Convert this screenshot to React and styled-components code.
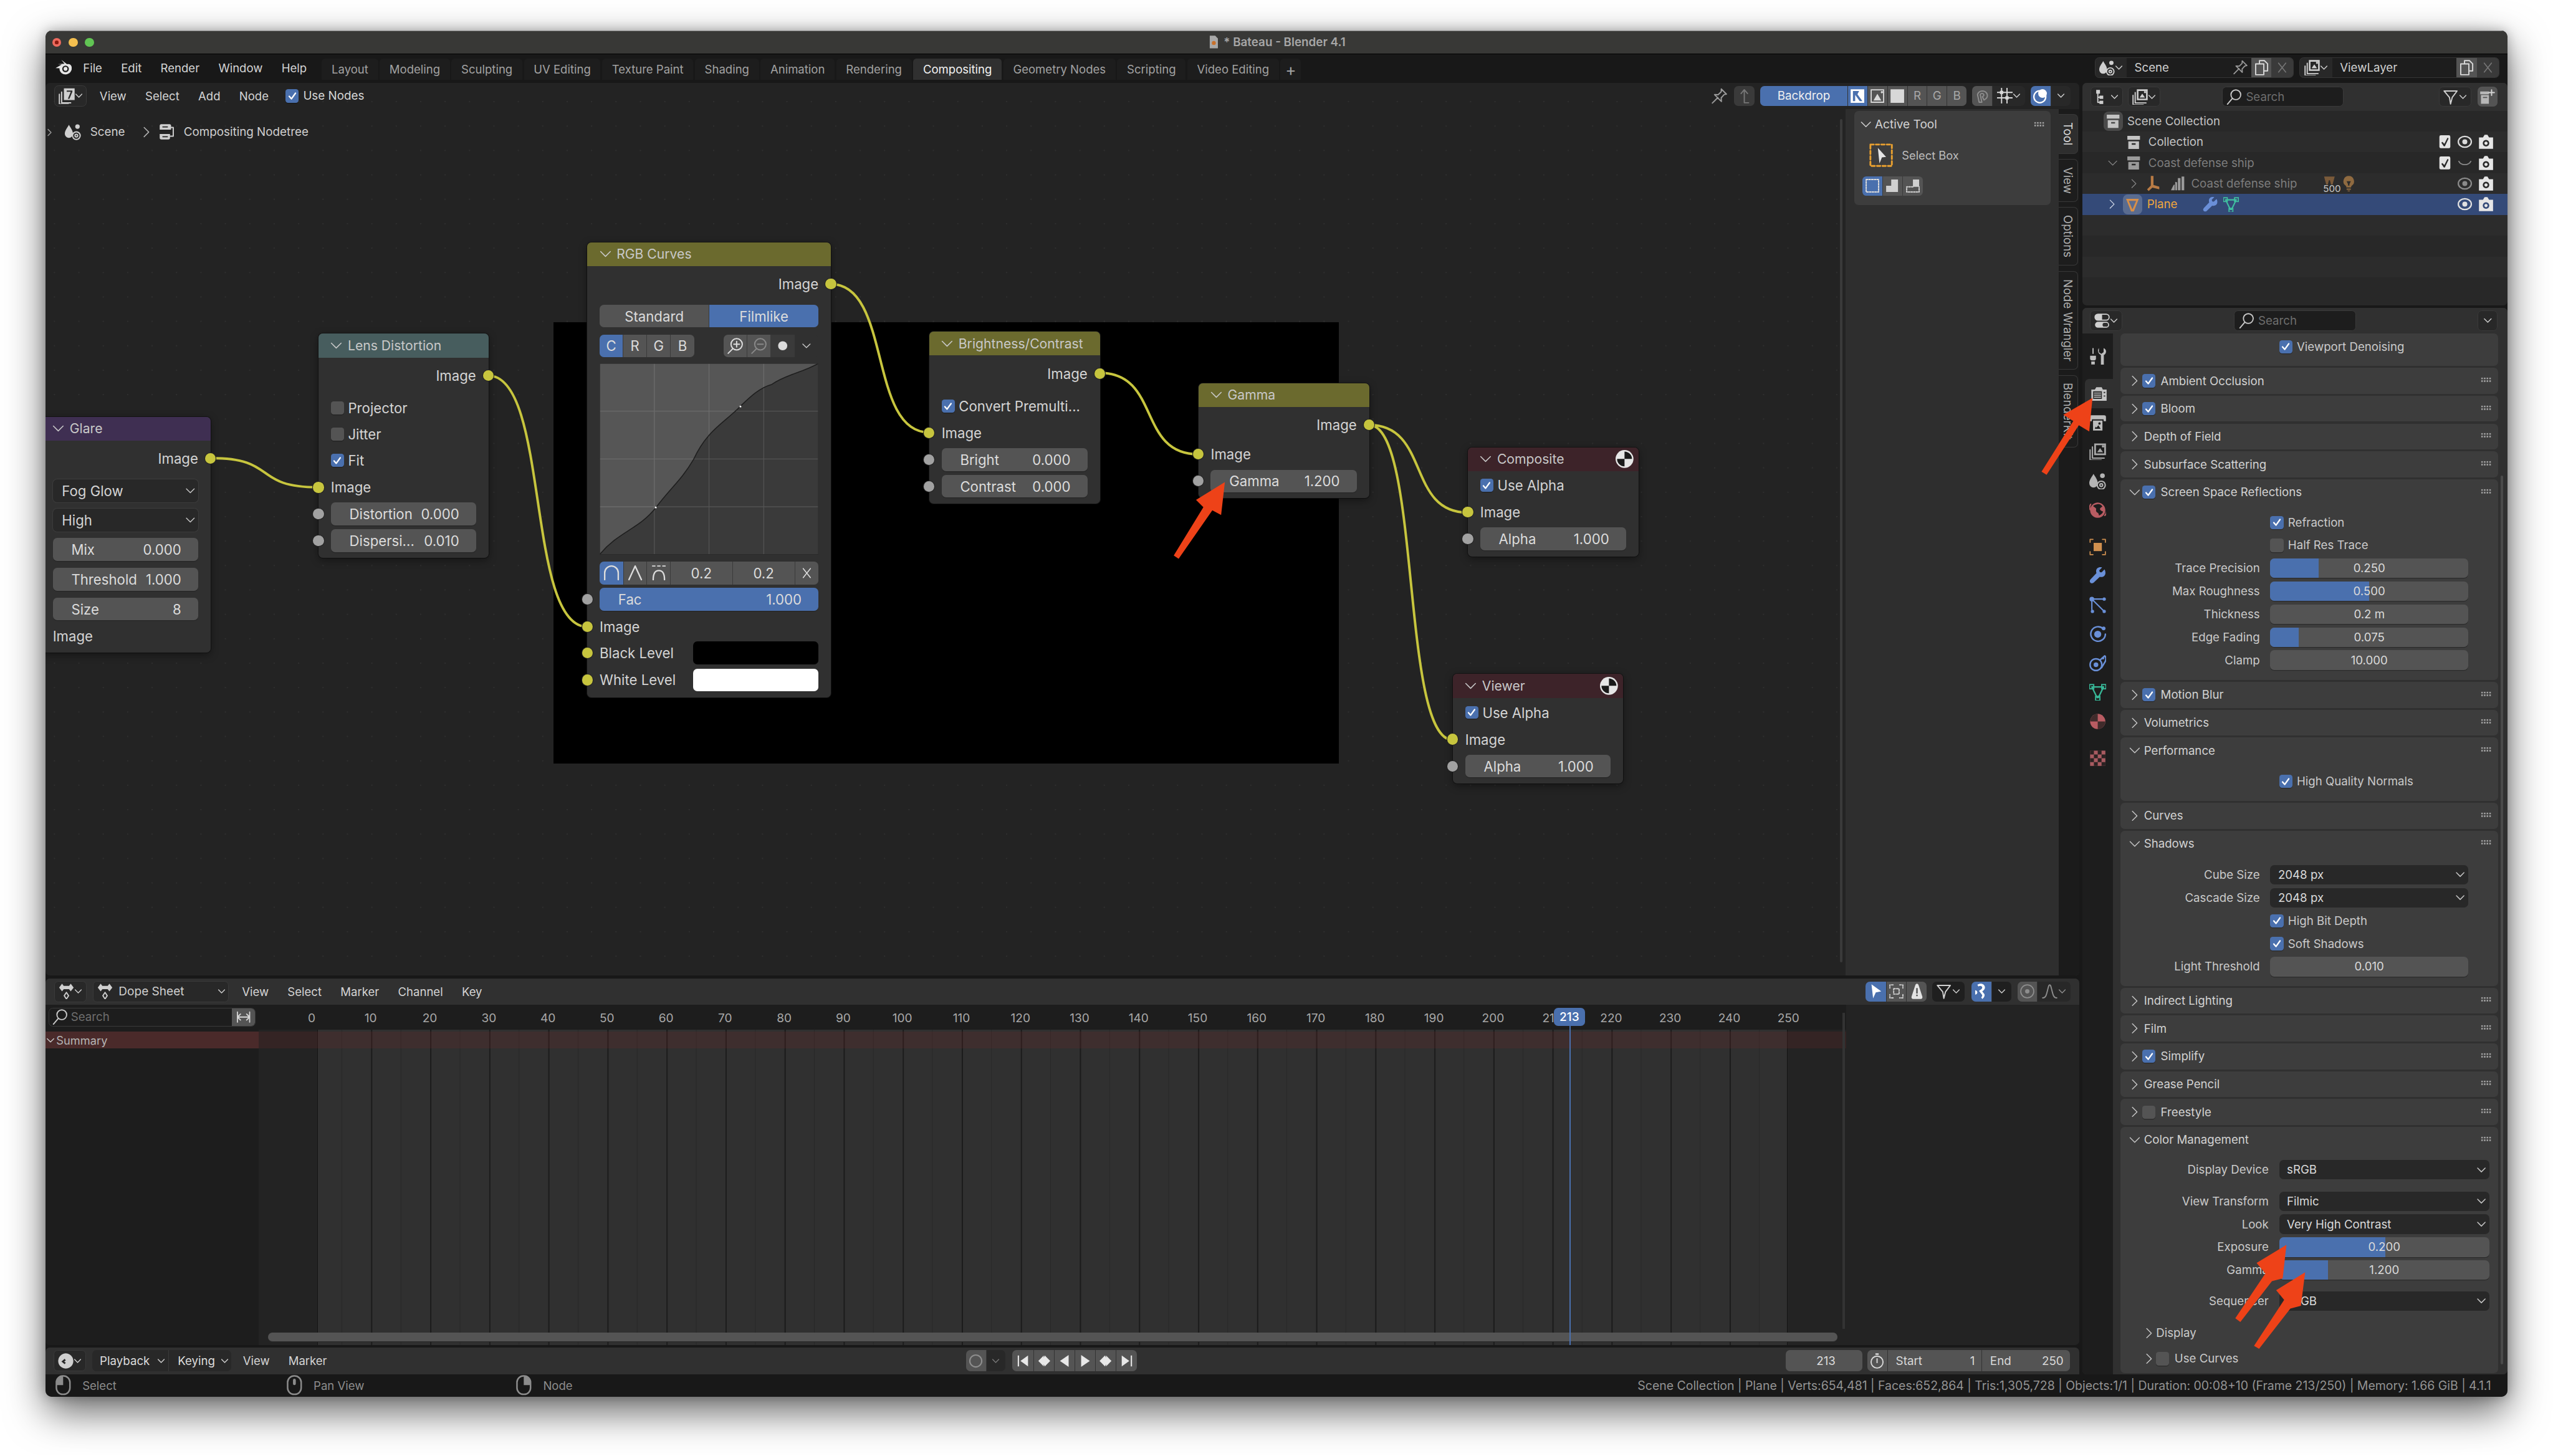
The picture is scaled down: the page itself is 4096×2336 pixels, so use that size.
import styled, { createGlobalStyle } from 'styled-components'

// all sizes below are in the 1568 wide space of the reference, Page scales them up
const GlobalStyle = createGlobalStyle`
  html, body { margin: 0; padding: 0; background: #fff; overflow: hidden; }
  * { box-sizing: border-box; }
`

const Page = styled.div`
  zoom: 2.6122;
  position: relative;
  width: 1568px;
  height: 894px;
  padding: 18.8px 28px 0;
  font-family: Inter, "Noto Sans", "Liberation Sans", sans-serif;
  font-size: 7.15px;
  color: #d6d6d6;
`

const Win = styled.div`
  width: 1512px;
  height: 839px;
  display: flex;
  flex-direction: column;
  background: #181818;
  border-radius: 4px;
  overflow: hidden;
  box-shadow: 0 9px 24px rgba(0, 0, 0, 0.6), 0 0 7px rgba(0, 0, 0, 0.25);
`

const TitleBar = styled.div`
  height: 14.4px;
  flex: none;
  display: flex;
  align-items: center;
  justify-content: center;
  gap: 2px;
  position: relative;
  background: #383836;
  border-top: 0.6px solid #8a8a8a;
  border-bottom: 0.5px solid #000;
  font-weight: 600;
  font-size: 7.2px;
  color: #a6a6a6;
`

const Lights = styled.div`
  position: absolute;
  left: 4px;
  top: 4px;
  display: flex;
  gap: 4.4px;
`

const Light = styled.div`
  width: 5.7px;
  height: 5.7px;
  border-radius: 50%;
  background: ${p => p.$c};
  display: flex;
  align-items: center;
  justify-content: center;
  &::after {
    content: '';
    width: 2px;
    height: 2px;
    border-radius: 50%;
    background: ${p => p.$dot || 'transparent'};
  }
`

const TopBar = styled.div`
  height: 17.7px;
  flex: none;
  display: flex;
  align-items: flex-start;
  background: #181818;
`

const MenuSection = styled.div`
  width: 169.7px;
  height: 100%;
  display: flex;
  align-items: center;
  padding: 0 0 1px 6px;
  gap: 7px;
`

const MenuRow = styled.div`
  display: flex;
  align-items: center;
  gap: ${p => p.$gap || 11.6}px;
  margin-left: ${p => p.$ml || 0}px;
  color: ${p => p.$c || '#d4d4d4'};
  font-size: 7.1px;
  white-space: nowrap;
`

const Tabs = styled.div`
  display: flex;
  gap: 1px;
  height: 13.2px;
  margin-top: 2.8px;
`

const Tab = styled.div`
  display: flex;
  align-items: center;
  padding: 0 ${p => p.$pad || 6}px;
  border-radius: 2px 2px 0 0;
  background: ${p => (p.$on ? '#303030' : '#1d1d1d')};
  color: ${p => (p.$on ? '#f2f2f2' : '#a2a2a2')};
  font-size: ${p => p.$fs || 7.1}px;
  white-space: nowrap;
`

const SceneBoxes = styled.div`
  margin-left: auto;
  margin-right: 5px;
  margin-top: 2px;
  display: flex;
  gap: 3.6px;
`

const SelectorBox = styled.div`
  width: ${p => p.$w}px;
  height: 12.5px;
  display: flex;
  align-items: stretch;
  border-radius: 2.6px;
  overflow: hidden;
  background: #282828;
  border: 0.5px solid #353535;
`

const SelectorIcon = styled.div`
  width: ${p => p.$w}px;
  display: flex;
  align-items: center;
  justify-content: center;
  color: #d0d0d0;
`

const SelectorField = styled.div`
  flex: 1;
  display: flex;
  align-items: center;
  justify-content: space-between;
  padding: 0 2px 0 4.8px;
  background: #1d1d1d;
  color: #d0d0d0;
  font-size: 7.15px;
`

const SmallBtn = styled.div`
  width: ${p => p.$w || 12.5}px;
  height: ${p => (p.$h ? `${p.$h}px` : 'auto')};
  margin-left: ${p => p.$ml || 0}px;
  border-radius: ${p => p.$r || 0}px;
  flex: none;
  display: flex;
  align-items: center;
  justify-content: center;
  background: ${p => p.$bg || '#545454'};
  color: ${p => p.$c || '#d8d8d8'};
`

const Main = styled.div`
  flex: 1;
  min-height: 0;
  display: flex;
  gap: 2px;
`

const LeftCol = styled.div`
  width: 1249px;
  display: flex;
  flex-direction: column;
`

const NodeEditor = styled.div`
  height: 548.3px;
  flex: none;
  display: flex;
  flex-direction: column;
  border-radius: 2.6px;
  overflow: hidden;
  background-color: #232323;
  background-image: radial-gradient(circle at center, #2f2f2f 0.4px, transparent 0.55px);
  background-size: 15px 15px;
  background-position: -2px 4px;
`

const EditorHeader = styled.div`
  height: 16.1px;
  flex: none;
  display: flex;
  align-items: center;
  padding: 0 5.4px;
  background: ${p => p.$bg || 'transparent'};
`

const ModeBtn = styled.div`
  width: ${p => p.$w || 20}px;
  height: ${p => p.$h || 12.8}px;
  margin-left: ${p => p.$ml || 0}px;
  flex: none;
  display: flex;
  align-items: center;
  justify-content: ${p => (p.$between ? 'flex-start' : 'center')};
  padding: ${p => (p.$between ? '0 1.6px 0 2.6px' : '0')};
  background: #282828;
  border-radius: 2.6px;
  border: 0.5px solid #3a3a3a;
  color: #cfcfcf;
  font-size: 7.3px;
`

const ModeText = styled.span`
  margin: 0 auto 0 3.4px;
`

const CheckBox = styled.div`
  width: ${p => p.$s || 8.1}px;
  height: ${p => p.$s || 8.1}px;
  flex: none;
  border-radius: 1.6px;
  display: flex;
  align-items: center;
  justify-content: center;
  background: ${p => (p.$on ? '#4a70ae' : '#545454')};
  box-shadow: 0 0.5px 0 rgba(0, 0, 0, 0.3);
`

const CheckLabel = styled.div`
  display: flex;
  align-items: center;
  gap: ${p => p.$gap || 2.8}px;
  margin-left: ${p => p.$ml || 0}px;
  font-size: ${p => (p.$fs ? `${p.$fs}px` : 'inherit')};
  white-space: nowrap;
`

const Group = styled.div`
  display: flex;
  height: ${p => p.$h || 12.4}px;
  margin-left: ${p => (p.$auto ? 'auto' : `${p.$ml || 0}px`)};
  border-radius: 2.6px;
  overflow: hidden;
  flex: none;
`

const GroupBtn = styled.div`
  width: ${p => p.$w || 12.2}px;
  flex: none;
  display: flex;
  align-items: center;
  justify-content: ${p => (p.$spread ? 'space-between' : 'center')};
  padding: ${p => (p.$spread ? '0 4px 0 5px' : '0')};
  background: ${p => p.$bg || '#545454'};
  color: ${p => p.$c || '#d8d8d8'};
  font-size: 7.2px;
  & + & { border-left: 0.4px solid #333; }
`

const Fill = styled.span`
  flex: 1;
`

const Gap = styled.span`
  width: ${p => p.$w}px;
  flex: none;
`

const EditorBody = styled.div`
  flex: 1;
  min-height: 0;
  display: flex;
`

const Canvas = styled.div`
  flex: 1;
  position: relative;
`

const Backdrop = styled.div`
  position: absolute;
  left: ${340 - 28}px;
  top: ${197.8 - 67}px;
  width: 482.4px;
  height: 271.2px;
  background: #000;
`

const Links = styled.svg`
  position: absolute;
  left: 0;
  top: 0;
  width: 1249px;
  height: 533px;
  pointer-events: none;
  z-index: 2;
`

const Crumbs = styled.div`
  position: absolute;
  left: 12px;
  top: 9px;
  display: flex;
  align-items: center;
  color: #cfcfcf;
  font-size: 7.2px;
`

const EdgeArrow = styled.div`
  position: absolute;
  left: 0;
  top: 8.8px;
  width: 4px;
  height: 11px;
  display: flex;
  align-items: center;
  overflow: hidden;
  color: #9a9a9a;
`

const NodeBox = styled.div`
  position: absolute;
  left: ${p => p.$x - 28}px;
  top: ${p => p.$y - 67}px;
  width: ${p => p.$w}px;
  height: ${p => p.$h}px;
  background: #303030;
  border-radius: 2.6px;
  box-shadow: 0 1.5px 5px rgba(0, 0, 0, 0.4), 0 0 0 0.4px #161616;
  font-size: 8.5px;
  color: #d4d4d4;
  display: flex;
  flex-direction: column;
`

const NodeHead = styled.div`
  height: 14.6px;
  flex: none;
  display: flex;
  align-items: center;
  gap: 3px;
  padding: 0 3px 0 7px;
  border-radius: 2.6px 2.6px 0 0;
  background: ${p => p.$c};
  font-size: 8.1px;
  color: #c8c8c8;
  white-space: nowrap;
`

const BallSlot = styled.span`
  margin-left: auto;
  display: flex;
`

const NodeBody = styled.div`
  display: flex;
  flex-direction: column;
  padding: 0 7.6px;
`

const NodeRow = styled.div`
  height: ${p => p.$h || 14}px;
  margin-top: ${p => p.$mt || 0}px;
  flex: none;
  position: relative;
  display: flex;
  align-items: center;
  justify-content: ${p => (p.$right ? 'flex-end' : 'flex-start')};
  white-space: nowrap;
`

const Socket = styled.div`
  position: absolute;
  top: 3.7px;
  ${p => (p.$right ? 'right' : 'left')}: -10.9px;
  width: 6.6px;
  height: 6.6px;
  border-radius: 50%;
  background: ${p => (p.$gray ? '#a1a1a1' : '#c7c53e')};
  box-shadow: 0 0 0 0.4px #222;
  z-index: 3;
`

const NumField = styled.div`
  width: 100%;
  height: 14px;
  display: flex;
  align-items: center;
  justify-content: space-between;
  padding: 0 10.4px 0 11.4px;
  border-radius: 2.6px;
  background: ${p => (p.$on ? '#4a70ae' : '#545454')};
  box-shadow: 0 0.5px 0 #262626;
  color: #dcdcdc;
  white-space: nowrap;
`

const NodeDrop = styled.div`
  width: 100%;
  height: 14px;
  display: flex;
  align-items: center;
  justify-content: space-between;
  padding: 0 1.6px 0 5.6px;
  border-radius: 2.6px;
  background: #282828;
  box-shadow: 0 0 0 0.4px #3c3c3c;
`

const Seg = styled.div`
  display: flex;
  width: ${p => (p.$w ? `${p.$w}px` : '100%')};
  height: 14px;
  margin-left: ${p => p.$ml || 0}px;
  border-radius: 2.6px;
  overflow: hidden;
  flex: none;
`

const SegBtn = styled.div`
  flex: ${p => (p.$w ? `0 0 ${p.$w}px` : '1')};
  display: flex;
  align-items: center;
  justify-content: center;
  background: ${p => (p.$on ? '#4a70ae' : p.$bg || '#545454')};
  color: ${p => p.$c || '#dcdcdc'};
  & + & { border-left: 0.4px solid #3a3a3a; }
`

const Swatch = styled.div`
  width: 76.9px;
  height: 14px;
  margin-left: auto;
  border-radius: 2.6px;
  background: ${p => p.$c};
`

const CurveBox = styled.svg`
  display: block;
  width: 134.4px;
  height: 117.4px;
`

const Sidebar = styled.div`
  width: 143.5px;
  flex: none;
  display: flex;
  background: #2e2e2e;
  position: relative;
`

const SideScroll = styled.div`
  position: absolute;
  left: -3.4px;
  top: 6px;
  bottom: 8px;
  width: 1.4px;
  border-radius: 1px;
  background: #3a3a3a;
`

const SideMain = styled.div`
  flex: 1;
  padding: 1.3px 5px 0 5.5px;
`

const ToolPanel = styled.div`
  height: 57.7px;
  border-radius: 2.6px;
  background: #3d3d3d;
  padding: 3.2px 4px 0 3.5px;
`

const ToolHead = styled.div`
  display: flex;
  align-items: center;
  gap: 1.6px;
  height: 10px;
  font-size: 7.3px;
  color: #d2d2d2;
`

const Grip = styled.div`
  margin-left: auto;
  width: 6.6px;
  height: 3.3px;
  background-image: radial-gradient(circle, #a0a0a0 0.5px, transparent 0.6px);
  background-size: 1.65px 1.65px;
`

const ToolRow = styled.div`
  display: flex;
  align-items: center;
  gap: 5.5px;
  margin-top: 6.5px;
  padding-left: 5.5px;
  font-size: 7px;
  color: #bcbcbc;
`

const ToolModes = styled.div`
  display: flex;
  margin: 5.6px 0 0 1.4px;
  width: 37px;
  height: 12px;
  border-radius: 2.4px;
  overflow: hidden;
`

const SideTabs = styled.div`
  width: 12.4px;
  flex: none;
  display: flex;
  flex-direction: column;
  gap: 3.2px;
  padding-top: 3px;
  background: #1b1b1b;
`

const SideTab = styled.div`
  width: 11.8px;
  height: ${p => p.$h}px;
  display: flex;
  align-items: center;
  justify-content: center;
  writing-mode: vertical-rl;
  font-size: 7.1px;
  border-radius: 0 2.6px 2.6px 0;
  border: 0.4px solid #383838;
  border-left: 0;
  background: ${p => (p.$on ? '#2e2e2e' : '#1d1d1d')};
  color: ${p => (p.$on ? '#dcdcdc' : '#b0b0b0')};
`

const DopeSheet = styled.div`
  margin-top: 1.8px;
  height: 225px;
  flex: none;
  display: flex;
  flex-direction: column;
  background: #232323;
  border-radius: 2.6px;
  overflow: hidden;
`

const DopeBody = styled.div`
  flex: 1;
  min-height: 0;
  display: flex;
`

const DopeMain = styled.div`
  width: 1106px;
  flex: none;
  display: flex;
  flex-direction: column;
  position: relative;
`

const Ruler = styled.div`
  height: 15.2px;
  flex: none;
  display: flex;
  align-items: center;
  position: relative;
  background: #1d1d1d;
  padding-left: 2px;
`

const SearchBox = styled.div`
  height: 11.7px;
  width: ${p => p.$w}px;
  flex: none;
  display: flex;
  align-items: center;
  gap: 2px;
  padding-left: 1.6px;
  border-radius: 2.6px;
  background: #1d1d1d;
  border: 0.5px solid #3a3a3a;
  color: #6e6e6e;
  font-size: 7.15px;
  overflow: hidden;
`

const SearchToggle = styled.div`
  margin-left: auto;
  width: 14px;
  height: 100%;
  background: #545454;
  color: #d6d6d6;
  display: flex;
  align-items: center;
  justify-content: center;
`

const Frame = styled.span`
  position: absolute;
  left: ${p => p.$x}px;
  top: 3.8px;
  transform: translateX(-50%);
  color: #a8a8a8;
  font-size: 7.3px;
`

const FrameTag = styled.div`
  position: absolute;
  left: 926.4px;
  top: 2px;
  width: 19px;
  height: 11px;
  border-radius: 2.6px;
  background: #4a70ae;
  color: #fff;
  font-size: 7.3px;
  font-weight: 500;
  display: flex;
  align-items: center;
  justify-content: center;
  z-index: 2;
`

const DopeRows = styled.div`
  flex: 1;
  min-height: 0;
  display: flex;
`

const Channels = styled.div`
  width: 130.8px;
  flex: none;
  padding-top: 1.2px;
  background: #1d1d1d;
`

const SummaryChannel = styled.div`
  height: 10.6px;
  display: flex;
  align-items: center;
  gap: 0.8px;
  padding-left: 0.4px;
  background: #4a2a2a;
  color: #b4b4b4;
  font-size: 7px;
`

const Tracks = styled.div`
  flex: 1;
  position: relative;
  background: #232323;
`

const FrameRange = styled.div`
  position: absolute;
  left: 36.2px;
  top: 0;
  bottom: 0;
  width: 903px;
  background-color: #303030;
  background-image:
    linear-gradient(90deg, #1c1c1c 0.6px, transparent 0.6px),
    linear-gradient(90deg, #282828 0.5px, transparent 0.5px);
  background-size: 36.28px 100%, 18.14px 100%;
  background-position: -3.6px 0, -3.6px 0;
  border-left: 0.6px solid #141414;
  border-right: 0.6px solid #141414;
`

const SummaryTrack = styled.div`
  position: absolute;
  left: 0;
  right: 0;
  top: 1.2px;
  height: 10.4px;
  background: rgba(122, 42, 42, 0.2);
`

const CurrentLine = styled.div`
  position: absolute;
  left: 936px;
  top: 13px;
  bottom: 0;
  width: 0.8px;
  background: #4a70ae;
`

const HScroll = styled.div`
  position: absolute;
  left: 5.8px;
  right: 5.4px;
  bottom: 2px;
  height: 5.5px;
  border-radius: 2.7px;
  background: #545454;
  box-shadow: 0 0.5px 0 #2a2a2a;
`

const VScroll = styled.div`
  position: absolute;
  right: 0.8px;
  top: 5px;
  bottom: 10px;
  width: 1.4px;
  background: #333;
`

const TimelineBar = styled.div`
  margin-top: 1.6px;
  height: 16.4px;
  flex: none;
  display: flex;
  align-items: center;
  padding: 0 5.6px 0 5px;
  background: #303030;
  border-radius: 2.6px 2.6px 0 0;
`

const TimelineLeft = styled.div`
  width: 560.5px;
  flex: none;
  display: flex;
  align-items: center;
`

const Field = styled.div`
  height: 12.9px;
  flex: none;
  width: ${p => p.$w}px;
  margin-left: ${p => (p.$auto ? 'auto' : `${p.$ml || 0}px`)};
  display: flex;
  align-items: center;
  justify-content: ${p => (p.$center ? 'center' : 'space-between')};
  padding: ${p => p.$pad || '0 1.8px 0 4.5px'};
  background: ${p => p.$bg || '#545454'};
  color: ${p => p.$c || '#dcdcdc'};
  font-size: 7.15px;
  border-radius: ${p => p.$r || '2.6px'};
  & + & { border-left: 0.4px solid #3a3a3a; }
`

const RightCol = styled.div`
  flex: 1;
  min-width: 0;
  display: flex;
  flex-direction: column;
  gap: 1.8px;
`

const Outliner = styled.div`
  height: 136.5px;
  flex: none;
  display: flex;
  flex-direction: column;
  border-radius: 2.6px;
  overflow: hidden;
  background: #282828;
`

const OutlinerHeader = styled.div`
  height: 17.1px;
  flex: none;
  display: flex;
  align-items: center;
  background: #303030;
  padding: 0 5.8px 0 5px;
`

const SmallSearch = styled(SearchBox)`
  height: 12.4px;
  margin-left: ${p => p.$ml}px;
  padding-left: 2.4px;
  gap: 2.4px;
`

const ORow = styled.div`
  height: 12.8px;
  flex: none;
  display: flex;
  align-items: center;
  position: relative;
  padding-left: ${p => p.$in || 0}px;
  background: ${p => (p.$sel ? '#344a78' : p.$alt ? '#2c2c2c' : '#282828')};
  color: ${p => p.$c || '#c4c4c4'};
  font-size: 7.15px;
  white-space: nowrap;
`

const OText = styled.span`
  margin-left: ${p => p.$ml || 3}px;
`

const ORight = styled.div`
  position: absolute;
  right: 8.4px;
  top: 0;
  bottom: 0;
  display: flex;
  align-items: center;
  gap: 3.2px;
`

const IconHalo = styled.div`
  width: 12px;
  height: 12px;
  flex: none;
  display: flex;
  align-items: center;
  justify-content: center;
  border-radius: 3px;
  background: ${p => p.$bg};
`

const BrushWrap = styled.span`
  position: relative;
  display: flex;
`

const BrushCount = styled.span`
  position: absolute;
  left: 1px;
  top: 4px;
  font-size: 5.8px;
  color: #c8c8c8;
`

const Properties = styled.div`
  flex: 1;
  min-height: 0;
  display: flex;
  flex-direction: column;
  border-radius: 2.6px;
  overflow: hidden;
  background: #303030;
  position: relative;
`

const PropsHeader = styled.div`
  height: 15.6px;
  flex: none;
  display: flex;
  align-items: center;
  padding: 0 6px 0 4.7px;
  background: #303030;
`

const PropsBody = styled.div`
  flex: 1;
  min-height: 0;
  display: flex;
`

const PropTabs = styled.div`
  width: 18.6px;
  flex: none;
  display: flex;
  flex-direction: column;
  padding-top: 5.2px;
  background: #1d1d1d;
`

const PropTab = styled.div`
  height: 17.85px;
  margin-top: ${p => p.$mt || 0}px;
  flex: none;
  display: flex;
  align-items: center;
  justify-content: center;
  ${p => p.$on && 'background: #303030; border-radius: 2.6px 0 0 2.6px; margin-left: 1.4px;'}
`

const PanelList = styled.div`
  flex: 1;
  min-width: 0;
  display: flex;
  flex-direction: column;
  gap: 1.2px;
  padding: 0 5.5px 0 4.9px;
  overflow: hidden;
`

const PanelBox = styled.div`
  flex: none;
  background: #3d3d3d;
  border-radius: 2.6px;
  padding-bottom: ${p => p.$pb || 0}px;
  position: relative;
`

const PanelHead = styled.div`
  height: 15.9px;
  display: flex;
  align-items: center;
  padding-left: 5px;
  gap: 0.7px;
  color: #d2d2d2;
  position: relative;
`

const PanelTitle = styled.span`
  margin-left: ${p => (p.$check ? 2.5 : 1)}px;
`

const PanelGrip = styled(Grip)`
  position: absolute;
  right: 4.4px;
  top: 5.6px;
`

const PanelInner = styled.div`
  padding-top: ${p => p.$pt || 4.4}px;
  display: flex;
  flex-direction: column;
  gap: 2.1px;
`

const PropRow = styled.div`
  height: 12px;
  margin-top: ${p => p.$mt || 0}px;
  display: grid;
  grid-template-columns: ${p => p.$label}px ${p => p.$field}px;
  column-gap: 6.4px;
  align-items: center;
  color: #cacaca;
  white-space: nowrap;
`

const PropLabel = styled.div`
  text-align: right;
`

const Slider = styled.div`
  height: 12px;
  position: relative;
  border-radius: 2.6px;
  overflow: hidden;
  background: #545454;
  box-shadow: 0 0.5px 0 #2c2c2c;
  color: #dadada;
  display: flex;
  align-items: center;
  justify-content: center;
`

const SliderFill = styled.div`
  position: absolute;
  left: 0;
  top: 0;
  bottom: 0;
  background: #4a70ae;
`

const SliderText = styled.span`
  position: relative;
`

const PropDrop = styled.div`
  height: 12px;
  display: flex;
  align-items: center;
  justify-content: space-between;
  padding: 0 1.8px 0 4.8px;
  background: #282828;
  border-radius: 2.6px;
  color: #dadada;
`

const SubRow = styled.div`
  height: 12px;
  margin-top: ${p => p.$mt || 0}px;
  display: flex;
  align-items: center;
  gap: ${p => p.$gap || 2.8}px;
  padding-left: ${p => p.$in}px;
  color: #cacaca;
`

const PropScroll = styled.div`
  position: absolute;
  right: 2.6px;
  top: 103px;
  bottom: 6px;
  width: 1.5px;
  border-radius: 1px;
  background: #4a4a4a;
`

const StatusBar = styled.div`
  height: 13.8px;
  flex: none;
  display: flex;
  align-items: center;
  position: relative;
  padding: 0 10px 0 4.5px;
  background: #181818;
  color: #8c8c8c;
  font-size: 7.1px;
  white-space: nowrap;
`

const StatusItem = styled.div`
  width: ${p => p.$w}px;
  flex: none;
  display: flex;
  align-items: center;
  gap: 5.6px;
`

const StatusText = styled.div`
  margin-left: auto;
  font-size: 7.45px;
  color: #939393;
`

const Overlay = styled.svg`
  position: absolute;
  left: 0;
  top: 0;
  width: 1568px;
  height: 894px;
  pointer-events: none;
  z-index: 10;
`

const IconSvg = styled.svg`
  width: ${p => p.$s}px;
  height: ${p => p.$s}px;
  flex: none;
  color: ${p => p.$c || 'inherit'};
  fill: currentColor;
  display: block;
`

const St = props => (
  <g fill="none" stroke="currentColor" strokeWidth="1.1" strokeLinecap="round" strokeLinejoin="round" {...props} />
)

const icons = {
  blender: <><path d="M6 1.3 11 5.2c2.8-.8 4.6 1.6 4.2 4.2-.5 3-3.3 5.2-6.3 4.8-2.8-.4-4.8-2.9-4.5-5.4L.9 8.7 6.3 5.5 2.8 5.2l6-.4z" /><circle cx="9.7" cy="9.3" r="2.9" fill="#181818" /><circle cx="9.7" cy="9.3" r="1.7" /></>,
  compositor: <><St><path d="M3.5 4.5v9.5h8M1.5 6.5v8.8h8" /></St><path fillRule="evenodd" d="M5.5 1.2h9.5v10.3H5.5zM8 3.2v1.1h3.6L9 10.4h1.4l2.6-6.2V3.2z" /></>,
  scene: <><path d="M4.4 2c1.7 3 3.6 5 3.6 8a3.6 3.6 0 0 1-7.2 0c0-3 2-5 3.6-8z" /><circle cx="12" cy="3.6" r="2" /><St><circle cx="11" cy="11.6" r="3.4" /><circle cx="11" cy="11.6" r="1.2" /></St></>,
  nodetree: <><path fillRule="evenodd" d="M3 1h7.5A1.5 1.5 0 0 1 12 2.5V6H1.5V2.5A1.5 1.5 0 0 1 3 1zM4 3v1h5V3z" /><path fillRule="evenodd" d="M1.5 10H11v3.5A1.5 1.5 0 0 1 9.5 15H3a1.5 1.5 0 0 1-1.5-1.5zM4 12v1h5v-1z" /><St><path d="M12 4h2v8h-3" /></St></>,
  pin: <St><path d="M9.6 1.8 14.2 6.4l-2 .4-2.7 3 .2 3.3-6.2-6.2 3.2.1 2.8-2.7zM6.5 9.5l-5 5" /></St>,
  parent: <St><path d="M8 14.5V3M5 6l3-3.5L11 6M8 14.5h4" /></St>,
  backA: <path fillRule="evenodd" d="M2 2h12v12H2zM4 3.5v9h2V7l4 5.5h2.4L8 6.5 9.5 3.5z" />,
  backB: <path fillRule="evenodd" d="M2 2h12v12H2zM3 3v10h10V3zM4.5 12 8 6l3.500 6zM11 4.500a1 1 0 1 1 0 .1z" />,
  backC: <path d="M2 2h12v12H2V2l12 12z" fillRule="evenodd" />,
  magnet: <St><path d="M5 14 3.500 7a4.700 4.700 0 0 1 9 0c.6 2.500-1 4-3 5l-1.500-3c1-.5 1.500-1 1.300-2a1.800 1.800 0 0 0-3.300 0L7.500 14z" /></St>,
  gridsnap: <><St><path d="M5 1v14M10 1v14M1 5h14M1 10h14" /></St><rect x="3.500" y="3.500" width="3" height="3" /><rect x="8.500" y="8.500" width="3" height="3" /></>,
  overlay: <><St strokeWidth="1.3"><circle cx="7.5" cy="9" r="5.5" /></St><circle cx="10" cy="6" r="4" /></>,
  filter: <St><path d="M1.5 2.5h12L9 8.5l-1.5 6-1-6z" /></St>,
  tree: <><rect x="2" y="1.5" width="3.5" height="3.5" /><rect x="5" y="6.8" width="3.5" height="3" /><rect x="5" y="11.5" width="3.5" height="3" /><St><path d="M3.5 5v8H5M3.500 8.300H5" /></St></>,
  layers: <><St><path d="M3.5 4v9.500h10M1.500 6.500v8.800H11" /></St><path fillRule="evenodd" d="M5 1h10v10H5zM6.500 2.500v7h7v-7zM7.500 8.500 10 5l2.500 3.500zM11.500 3.500a1 1 0 1 1 0 .1z" /></>,
  search: <St><circle cx="9.5" cy="6" r="4.5" /><path d="M6.2 9.5 1.800 14.700" /></St>,
  copy: <St><path d="M6 4V1.500h4.500L13.500 4.500V11H10M2.500 4.500H10V14.500H2.500z" /></St>,
  newcoll: <><path fillRule="evenodd" d="M1.500 3h8v2.500h-8zM2.200 6.300h7.300v8H2.200zM4 8v1h4V8z" opacity=".75" /><St><path d="M12 1.500v5M9.500 4h5" /></St></>,
  collection: <><path d="M1.500 1.500h13v4h-13z" /><path fillRule="evenodd" d="M2.500 7h11v8h-11zM6 9v1.600h4V9z" /></>,
  eye: <><St strokeWidth="1.3"><ellipse cx="8" cy="8" rx="6" ry="5" /></St><circle cx="8" cy="8" r="2.3" /></>,
  eyeoff: <St><path d="M2.500 6.500c2 4 9 4 11 0" /></St>,
  camera: <path fillRule="evenodd" d="M1.500 4h3.700l1.500-2.500h2.600L10.800 4h3.700v10.500h-13zM8 6.300a3 3 0 1 0 .01 0zM8 7.800a1.500 1.500 0 1 1-.01 0z" />,
  checkbox: <path fillRule="evenodd" d="M4 1.500h8A1.500 1.500 0 0 1 13.500 3v10a1.500 1.500 0 0 1-1.500 1.500H4A1.500 1.500 0 0 1 2.500 13V3A1.500 1.500 0 0 1 4 1.500zM5.500 8l-1 1 2.500 3.500h1l3.800-8-1.200-.5L7.500 10z" />,
  axis: <path d="M6.500 1h2.500v8.500l5.500 1.500v2.500L8 12l-3.500 3.200L3 13.500l3.500-3.500z" />,
  library: <><path d="M12 1.500h2.500v13H12zM8.500 3H11v11.500H8.500z" /><path d="M6 6.500 7.800 7v7.500H6zM4.500 9.500 2 14.500h3.500V9z" /></>,
  brush: <path d="M3 1.500h10L11 9H9.500L8.500 5h-1L6.500 9H5z" />,
  bulb: <><path fillRule="evenodd" d="M8 1a5 5 0 0 1 3 9c-.6.5-.8 1-.8 1.800H5.800c0-.8-.2-1.300-.8-1.800A5 5 0 0 1 8 1zM6 6l1.300 2.500V10h1.400V8.500L10 6z" /><path d="M6 12.800h4V14H6zM7 14.800h2v.8H7z" /></>,
  wrench: <path d="M13.800 2.700 11.300 5.200 9.800 5l-.5-1.500L11.700 1c-2-.5-4.500 0-5 2.500-.2 1 0 1.700.2 2.400L2 11c-1 1-1 2.300-.2 3s2 .7 2.900-.2L9.700 9c2.500.7 5.800-.8 4.600-5.200z" />,
  meshdata: <><St strokeWidth="1.2"><path d="M3 3.500h10L8.600 12.500H7.400z" /></St><rect x="1" y="1.500" width="3.600" height="3.600" fill="none" stroke="currentColor" /><rect x="11.400" y="1.500" width="3.600" height="3.600" fill="none" stroke="currentColor" /><rect x="6.200" y="11.500" width="3.600" height="3.600" fill="none" stroke="currentColor" /></>,
  meshobj: <path fillRule="evenodd" d="M2 2.500h12L9.300 14.500H6.700zM4.500 4.500l3.500 8 3.500-8z" />,
  tool: <><path d="M3.500 1h1v5h-1zM1.500 7.500h5V10A1.500 1.500 0 0 1 5 11.500H3A1.500 1.500 0 0 1 1.500 10zM2.500 12.500h3V15h-3z" /><path d="M9 1v3.500L11 6l2-1.500V1c2 .8 2.700 3 1.500 4.800-.4.600-.8.900-1.300 1.100v8a1 1 0 0 1-1 1h-.5a1 1 0 0 1-1-1v-8C8.500 6 7.300 3 9 1z" /></>,
  render: <><path fillRule="evenodd" d="M1.500 4.500h3L5.700 2.500h4.600l1 2h3.200v9.500h-13zM3 6v6.500h7.500V6zM12 6.500v1h1.300v-1zM12 9.500v1h1.300v-1z" /><St strokeWidth=".7"><path d="M4 7.500h5.500M4 9.300h5.500M4 11h5.500" /></St></>,
  output: <><path fillRule="evenodd" d="M2.500 2h11A1.500 1.500 0 0 1 15 3.500V7h-2V5.500H3V7H1V3.500A1.500 1.500 0 0 1 2.500 2z" /><path fillRule="evenodd" d="M4 6.500h8V15H4zM5.500 13.500h5L8.500 10.500 7 12.500l-.8-.8zM9.500 8a1 1 0 1 0 .01 0z" /></>,
  world: <><path fillRule="evenodd" d="M8 2a6.500 6.500 0 1 1-.01 0zM4 5c1 1 2 1 2.500 2s-.5 2 .5 3 2 1 2 3c1.500-.5 3.500-2 3.500-3.500-1 0-2-.5-2.500-1.500s1-2 2-2.500C11 3.500 9 3 7.500 3.500 6 4 5 4 4 5z" /><St><path d="M2 3.500c-1 1.500-1 3-.5 4.500M14 13c1-1 1.500-2 1.500-3" /></St></>,
  object: <><path d="M4.500 4.500h7v7h-7z" /><St strokeWidth=".9"><path d="M1.500 4V1.500H4M12 1.500h2.500V4M14.500 12v2.500H12M4 14.500H1.500V12" /></St></>,
  particles: <><circle cx="3" cy="3" r="2" /><circle cx="13.500" cy="3" r="1.400" /><circle cx="3.500" cy="13.500" r="1.400" /><circle cx="13.500" cy="13.500" r="1.400" /><St><path d="M3 3l9.500 9.500M5 3h7M3 5v7" /></St></>,
  physics: <><St strokeWidth="1.3"><path d="M12.500 3.200A6.200 6.200 0 1 0 14.500 8" /></St><circle cx="8" cy="8" r="3" /><circle cx="13" cy="3" r="1.600" /></>,
  constraint: <><St strokeWidth="1.3"><circle cx="6.500" cy="9.500" r="5" /><path d="M10 5.500 14 2c1 1 1.200 3 .3 5l-3 5" /></St><circle cx="6.500" cy="9.500" r="2" /><circle cx="12.500" cy="4" r="1.100" /></>,
  material: <><circle cx="8" cy="8" r="6.500" /><path d="M8 8h6.400A6.500 6.500 0 0 1 8 14.500zM8 8H1.600A6.500 6.500 0 0 1 8 1.500z" fill="#2a2222" opacity=".85" /></>,
  bwball: <><circle cx="8" cy="8" r="7.200" fill="#e6e6e6" /><path d="M8 2a6 6 0 0 1 6 6H8zM8 8v6a6 6 0 0 1-6-6z" fill="#1a1a1a" /></>,
  selectbox: <><St strokeDasharray="2 1.3" stroke="#e8a030"><rect x="1.500" y="1.500" width="13" height="13" /></St><path d="M6 3.500 11 9 8.500 9.300 7 13z" fill="#e4e4e4" /></>,
  dashrect: <St strokeDasharray="1.3 1.1"><rect x="2.500" y="2.500" width="11" height="11" /></St>,
  modeB: <path d="M7 2.500h6v11H2.500V8H7z" />,
  modeC: <><path d="M8 2.500h5.500V9H8z" /><St strokeDasharray="1.2 1.1"><path d="M8 9H2.500v4.500h11V9" /></St></>,
  keys: <><path d="M4 1 6.700 4.500 4 8 1.300 4.500zM12 1l2.700 3.500L12 8 9.300 4.500zM5 3h6v3H5z" /><St><path d="M8 9l2 3-2 3-2-3z" /></St></>,
  swap: <St><path d="M2 8h12M5 5 2 8l3 3M11 5l3 3-3 3M2 3v10M14 3v10" /></St>,
  arrow: <path d="M4 1.500 13 8l-5 1-2.500 5.500z" />,
  brackets: <St strokeDasharray="1.5 1.2"><path d="M5 2H2v3M11 2h3v3M14 11v3h-3M5 14H2v-3" /><rect x="5.500" y="5.500" width="5" height="5" /></St>,
  warning: <path fillRule="evenodd" d="M8 1c.8 0 1.300.6 1.500 1.300l3.500 10.500c.3 1.200-.4 2.200-1.500 2.200h-7c-1.100 0-1.800-1-1.500-2.200L6.500 2.300C6.700 1.600 7.200 1 8 1zM7.300 5v5h1.400V5zM7.300 11v1.500h1.400V11z" />,
  proportional: <path fillRule="evenodd" d="M7.500 1c2.500 0 4 1.500 4 3.500 0 1.500-1 2.500-2.500 3.500l2 2.500c.6 1.500-.5 3.500-2 4.500l-1-1.500c.8-.6 1.300-1.500.8-2.300L6 7.500c1.500-1 3-1.700 3-3S7 2.500 5.500 3.500L4.500 2C5.500 1.300 6.500 1 7.500 1zM2.500 7c1 0 2 1 2 2s-1 2-2 2z" />,
  target: <><St strokeWidth="1"><circle cx="8" cy="8" r="6" /></St><circle cx="8" cy="8" r="2" /></>,
  gauss: <St><path d="M1.500 14c3 0 3.500-3 4.500-7s1.200-5 2-5 1 1 2 5 1.500 7 4.500 7" /></St>,
  anim: <path fillRule="evenodd" d="M8 1a7 7 0 1 1-.01 0zM7 6 4 8.500 7 11l1-1.500L6.500 8.500 8 7.500z" />,
  circle: <St strokeWidth="1.2"><circle cx="8" cy="8" r="5.500" /></St>,
  jumpstart: <path d="M3 3h1.200v10H3zM12.500 3v10L5.500 8z" />,
  prevkey: <path d="M8 3v10L3 8zM9 3l5 5-5 5-2.500-5z" />,
  playrev: <path d="M12 2.500v11L4 8z" />,
  play: <path d="M4 2.500v11L12 8z" />,
  nextkey: <path d="M8 3v10l5-5zM7 3 2 8l5 5 2.500-5z" />,
  jumpend: <path d="M13 3h-1.200v10H13zM3.500 3v10l7-5z" />,
  clock: <><St strokeWidth="1.1"><circle cx="8" cy="9" r="5.500" /><path d="M8 6v3.500" /></St><path d="M6.500 1h3v1.400h-3z" /></>,
  mouseL: <><St><rect x="3.200" y="1.500" width="9.600" height="13" rx="4.500" /></St><path d="M8 1.500a4.800 4.800 0 0 0-4.800 4.500V8H8z" /></>,
  mouseM: <><St><rect x="3.200" y="1.500" width="9.600" height="13" rx="4.500" /></St><rect x="7" y="3.500" width="2" height="4.500" rx="1" /></>,
  mouseR: <><St><rect x="3.200" y="1.500" width="9.600" height="13" rx="4.500" /></St><path d="M8 1.500a4.800 4.800 0 0 1 4.800 4.500V8H8z" /></>,
  handleA: <St strokeWidth="1.3"><path d="M2 14V8a6 6 0 0 1 12 0v6" /></St>,
  handleB: <St strokeWidth="1.3"><path d="M2.500 14 8 2l5.500 12" /></St>,
  handleC: <><St strokeWidth="1.3"><path d="M3 14c0-5 1.500-8 5-8s5 3 5 8" /></St><path d="M2 1.500h3v1H2zM6.500 1.500h3v1h-3zM11 1.500h3v1h-3z" /></>,
  zoomIn: <St><circle cx="9" cy="6.500" r="5" /><path d="M9 4v5M6.500 6.500h5M5.500 10.500l-4 4" /></St>,
  zoomOut: <St><circle cx="9" cy="6.500" r="5" /><path d="M6.500 6.500h5M5.500 10.500l-4 4" /></St>,
  solid: <circle cx="8" cy="8" r="4.500" />,
  file: <><path d="M3.500 1h6l3 3v11h-9z" fill="#a8a8a8" /><circle cx="8" cy="9" r="2.200" fill="#c8702a" /></>,
  x: <St><path d="M4 3l8 10M12 3 4 13" /></St>,
  display: <><rect x="1.500" y="2" width="13" height="5.500" rx="2.700" fill="none" stroke="currentColor" /><path d="M4.200 2H8v5.500H4.200a2.700 2.700 0 0 1 0-5.500z" /><rect x="1.500" y="9" width="13" height="5.500" rx="2.700" /><rect x="8.500" y="10" width="5" height="3.500" rx="1.500" fill="#303030" /></>,
  texture: <><rect x="1.500" y="1.500" width="13" height="13" /><path d="M1.500 1.500h3.250v3.250H1.500zM8 1.500h3.250v3.250H8zM4.750 4.750H8V8H4.750zM11.250 4.750h3.250V8h-3.250zM1.500 8h3.250v3.250H1.500zM8 8h3.250v3.250H8zM4.750 11.250H8v3.250H4.750zM11.250 11.250h3.250v3.250h-3.250z" fill="#2a2222" /></>,
}

const Ico = ({ n, s = 10, c }) => (
  <IconSvg viewBox="0.8 0.8 14.4 14.4" $s={s} $c={c}>{icons[n]}</IconSvg>
)

const Chev = ({ d = 'down', s = 5.5, c = '#cfcfcf', w = 0.55 }) => {
  const paths = { down: 'M2 5 L8 11 L14 5', right: 'M5 2 L11 8 L5 14' }
  return (
    <IconSvg viewBox="0 0 16 16" $s={s} $c={c}>
      <path d={paths[d]} fill="none" stroke="currentColor" strokeWidth={16 * w / s} strokeLinecap="round" strokeLinejoin="round" />
    </IconSvg>
  )
}

const Tick = () => (
  <svg viewBox="0 0 16 16" width="76%" height="76%">
    <path d="M3 8.500 6.500 12.500 13 3.500" fill="none" stroke="#fff" strokeWidth="2.300" strokeLinecap="round" strokeLinejoin="round" />
  </svg>
)

const Check = ({ on, s }) => <CheckBox $on={on} $s={s}>{on && <Tick />}</CheckBox>

const Node = ({ x, y, w, h, color, title, ball, children }) => (
  <NodeBox $x={x} $y={y} $w={w} $h={h}>
    <NodeHead $c={color}>
      <Chev s={8} c="#c8c8c8" w={0.6} />
      {title}
      {ball && <BallSlot><Ico n="bwball" s={11} /></BallSlot>}
    </NodeHead>
    <NodeBody>{children}</NodeBody>
  </NodeBox>
)

const OutRow = ({ mt }) => (
  <NodeRow $mt={mt} $right>Image<Socket $right /></NodeRow>
)

const InRow = ({ mt }) => (
  <NodeRow $mt={mt}>Image<Socket /></NodeRow>
)

const NumRow = ({ mt, label, value, socket, on }) => (
  <NodeRow $mt={mt}>
    {socket && <Socket $gray />}
    <NumField $on={on}><span>{label}</span><span>{value}</span></NumField>
  </NodeRow>
)

const CheckRow = ({ mt, label, on }) => (
  <NodeRow $mt={mt}>
    <CheckLabel $gap={2.6}><Check on={on} s={8} />{label}</CheckLabel>
  </NodeRow>
)

const DropRow = ({ mt, label }) => (
  <NodeRow $mt={mt}>
    <NodeDrop>{label}<Chev s={6.4} c="#c8c8c8" /></NodeDrop>
  </NodeRow>
)

const CurveGraph = () => {
  const curve = 'M0 117.4 C12 103 24 102 34.6 88.5 C44 76 50 72 57.7 59 C66 41 76 37 86.5 26.3 C92 21 98 15 105.8 12.9 C114 7 125 5.5 134.4 0'
  return (
    <CurveBox viewBox="0 0 134.4 117.4">
      <rect width="134.4" height="117.4" fill="#565656" />
      <path d={`${curve} L134.4 117.4 Z`} fill="#3a3a3a" />
      <g stroke="rgba(255,255,255,0.13)" strokeWidth="0.5">
        <path d="M33.6 0v117.4M67.2 0v117.4M100.8 0v117.4M0 29.35h134.4M0 58.7h134.4M0 88.05h134.4" />
      </g>
      <path d={curve} fill="none" stroke="#1e1e1e" strokeWidth="0.6" />
      <rect x="34" y="88" width="1" height="1" fill="#fff" />
      <rect x="86" y="26" width="1" height="1" fill="#fff" />
      <rect x="0" y="0" width="134.4" height="117.4" fill="none" stroke="#2a2a2a" strokeWidth="0.5" />
    </CurveBox>
  )
}

const link = (x1, y1, x2, y2) => {
  const d = (x2 - x1) * 0.62
  return `M${x1} ${y1} C${x1 + d} ${y1} ${x2 - d} ${y2} ${x2} ${y2}`
}

const linkPaths = [
  link(130, 281.4, 195.6, 299.3),
  link(300, 230.7, 360.7, 385),
  link(510.3, 174.5, 570.7, 265.6),
  link(675.5, 229, 736, 279),
  link(840.9, 261, 901.5, 314.8),
  link(840.9, 261, 892.3, 454.5),
]

const topTabs = ['Layout', 'Modeling', 'Sculpting', 'UV Editing', 'Texture Paint', 'Shading', 'Animation', 'Rendering', 'Compositing', 'Geometry Nodes', 'Scripting', 'Video Editing']

const NodeGraph = () => (
  <Canvas>
    <Backdrop />
    <EdgeArrow><Chev d="right" s={5} c="#9a9a9a" /></EdgeArrow>
    <Crumbs>
      <Ico n="scene" s={10} />
      <Gap $w={5.4} />
      <span>Scene</span>
      <Gap $w={9.4} />
      <Chev d="right" s={7.6} c="#b0b0b0" w={0.6} />
      <Gap $w={3.7} />
      <Ico n="nodetree" s={9.6} />
      <Gap $w={5.8} />
      <span>Compositing Nodetree</span>
    </Crumbs>

    <Links viewBox="28 67 1249 533">
      {linkPaths.map(d => (
        <path key={d} d={d} fill="none" stroke="#c7c53e" strokeWidth="1.5" />
      ))}
    </Links>

    <Node x={24.8} y={256} w={104.5} h={144.8} color="#3f2f52" title="Glare">
      <OutRow mt={3.9} />
      <DropRow mt={5.9} label="Fog Glow" />
      <DropRow mt={4} label="High" />
      <NumRow mt={4.1} label="Mix" value="0.000" />
      <NumRow mt={4.4} label="Threshold" value="1.000" />
      <NumRow mt={4.2} label="Size" value="8" />
      <NodeRow $mt={2.7}>Image</NodeRow>
    </Node>

    <Node x={195.6} y={205} w={104.4} h={137.6} color="#475d5e" title="Lens Distortion">
      <OutRow mt={4.2} />
      <CheckRow mt={5.8} label="Projector" />
      <CheckRow mt={2.2} label="Jitter" />
      <CheckRow mt={2.1} label="Fit" on />
      <InRow mt={2.5} />
      <NumRow mt={2.3} label="Distortion" value="0.000" socket />
      <NumRow mt={2.4} label="Dispersi..." value="0.010" socket />
    </Node>

    <Node x={360.7} y={148.8} w={149.6} h={279.6} color="#6b6a2e" title="RGB Curves">
      <OutRow mt={4.1} />
      <NodeRow $mt={5.7}>
        <Seg>
          <SegBtn>Standard</SegBtn>
          <SegBtn $on>Filmlike</SegBtn>
        </Seg>
      </NodeRow>
      <NodeRow $mt={4.3}>
        <Seg $w={58}>
          <SegBtn $on>C</SegBtn><SegBtn>R</SegBtn><SegBtn>G</SegBtn><SegBtn>B</SegBtn>
        </Seg>
        <Seg $w={58} $ml={18.2}>
          <SegBtn><Ico n="zoomIn" s={10} /></SegBtn>
          <SegBtn $c="#888"><Ico n="zoomOut" s={10} /></SegBtn>
          <SegBtn $bg="#3a3a3a"><Ico n="solid" s={9} /></SegBtn>
          <SegBtn $bg="#303030"><Chev s={6} c="#c8c8c8" /></SegBtn>
        </Seg>
      </NodeRow>
      <NodeRow $mt={3.9} $h={117.4}><CurveGraph /></NodeRow>
      <NodeRow $mt={4.2}>
        <Seg>
          <SegBtn $on $w={14.4}><Ico n="handleA" s={10} /></SegBtn>
          <SegBtn $w={14.4}><Ico n="handleB" s={10} /></SegBtn>
          <SegBtn $w={14.4}><Ico n="handleC" s={10} /></SegBtn>
          <SegBtn>0.2</SegBtn>
          <SegBtn>0.2</SegBtn>
          <SegBtn $w={14.8}><Ico n="x" s={8} /></SegBtn>
        </Seg>
      </NodeRow>
      <NumRow mt={2.2} label="Fac" value="1.000" socket on />
      <InRow mt={2.8} />
      <NodeRow $mt={2}><Socket />Black Level<Swatch $c="#000" /></NodeRow>
      <NodeRow $mt={2.7}><Socket />White Level<Swatch $c="#fff" /></NodeRow>
    </Node>

    <Node x={570.7} y={203.8} w={104.8} h={105.4} color="#6b6a2e" title="Brightness/Contrast">
      <OutRow mt={4} />
      <CheckRow mt={6.2} label="Convert Premulti..." on />
      <InRow mt={2.4} />
      <NumRow mt={2.3} label="Bright" value="0.000" socket />
      <NumRow mt={2.4} label="Contrast" value="0.000" socket />
    </Node>

    <Node x={736} y={235.4} w={104.9} h={70.6} color="#6b6a2e" title="Gamma">
      <OutRow mt={4} />
      <InRow mt={4} />
      <NumRow mt={2.5} label="Gamma" value="1.200" socket />
    </Node>

    <Node x={901.5} y={274.7} w={104.8} h={67} color="#3d2329" title="Composite" ball>
      <CheckRow mt={1.8} label="Use Alpha" on />
      <InRow mt={2.4} />
      <NumRow mt={2.4} label="Alpha" value="1.000" socket />
    </Node>

    <Node x={892.3} y={414} w={104.5} h={67.4} color="#3d2329" title="Viewer" ball>
      <CheckRow mt={2} label="Use Alpha" on />
      <InRow mt={2.5} />
      <NumRow mt={2.5} label="Alpha" value="1.000" socket />
    </Node>
  </Canvas>
)

const NodeSidebar = () => (
  <Sidebar>
    <SideScroll />
    <SideMain>
      <ToolPanel>
        <ToolHead>
          <Chev s={7.4} c="#d0d0d0" w={0.6} />
          Active Tool
          <Grip />
        </ToolHead>
        <ToolRow>
          <Ico n="selectbox" s={14.6} />
          Select Box
        </ToolRow>
        <ToolModes>
          <SegBtn $on><Ico n="dashrect" s={10} /></SegBtn>
          <SegBtn $c="#cfcfcf"><Ico n="modeB" s={10} /></SegBtn>
          <SegBtn $c="#cfcfcf"><Ico n="modeC" s={10} /></SegBtn>
        </ToolModes>
      </ToolPanel>
    </SideMain>
    <SideTabs>
      <SideTab $h={24.5} $on>Tool</SideTab>
      <SideTab $h={26.3}>View</SideTab>
      <SideTab $h={36}>Options</SideTab>
      <SideTab $h={60.8}>Node Wrangler</SideTab>
      <SideTab $h={44.6}>BlenderKit</SideTab>
    </SideTabs>
  </Sidebar>
)

const frames = Array.from({ length: 26 }, (_, i) => i * 10)

const DopeArea = () => (
  <DopeSheet>
    <EditorHeader $bg="#303030">
      <ModeBtn><Ico n="keys" s={9.6} /><Chev s={5} /></ModeBtn>
      <ModeBtn $w={83.7} $between $ml={3.5}>
        <Ico n="keys" s={9.6} />
        <ModeText>Dope Sheet</ModeText>
        <Chev s={5} />
      </ModeBtn>
      <MenuRow $ml={8}>
        <span>View</span><span>Select</span><span>Marker</span><span>Channel</span><span>Key</span>
      </MenuRow>
      <Group $auto>
        <GroupBtn $w={12.5} $bg="#4a70ae" $c="#fff"><Ico n="arrow" s={9.6} /></GroupBtn>
        <GroupBtn $w={12.5} $c="#cdcdcd"><Ico n="brackets" s={9.6} /></GroupBtn>
        <GroupBtn $w={12.4} $c="#e4e4e4"><Ico n="warning" s={9.6} /></GroupBtn>
      </Group>
      <Group $ml={3.6}>
        <GroupBtn $w={20} $bg="#1f1f1f" $c="#d0d0d0"><Ico n="filter" s={9.6} /><Chev s={5} /></GroupBtn>
      </Group>
      <Group $ml={4}>
        <GroupBtn $bg="#4a70ae" $c="#fff"><Ico n="proportional" s={9.6} /></GroupBtn>
        <GroupBtn $bg="#1f1f1f"><Chev s={5} /></GroupBtn>
      </Group>
      <Group $ml={3.8}>
        <GroupBtn $c="#8e8e8e"><Ico n="target" s={9.6} /></GroupBtn>
        <GroupBtn $w={20.4} $bg="#282828" $c="#8e8e8e"><Ico n="gauss" s={9.6} /><Chev s={5} c="#8e8e8e" /></GroupBtn>
      </Group>
    </EditorHeader>
    <DopeBody>
      <DopeMain>
        <Ruler>
          <SearchBox $w={126.8}>
            <Ico n="search" s={9.6} c="#c8c8c8" />
            <span>Search</span>
            <SearchToggle><Ico n="swap" s={9} /></SearchToggle>
          </SearchBox>
          {frames.map(f => <Frame key={f} $x={163.4 + f * 3.628}>{f}</Frame>)}
          <FrameTag>213</FrameTag>
        </Ruler>
        <DopeRows>
          <Channels>
            <SummaryChannel><Chev s={5.4} c="#c8c8c8" />Summary</SummaryChannel>
          </Channels>
          <Tracks>
            <FrameRange />
            <SummaryTrack />
            <HScroll />
          </Tracks>
        </DopeRows>
        <CurrentLine />
        <VScroll />
      </DopeMain>
    </DopeBody>
  </DopeSheet>
)

const TimelineArea = () => (
  <TimelineBar>
    <TimelineLeft>
      <ModeBtn><Ico n="anim" s={9.6} /><Chev s={5} /></ModeBtn>
      <Field $w={46.5} $ml={3.8} $bg="#282828" $r="2.6px 0 0 2.6px">Playback<Chev s={5} /></Field>
      <Field $w={38.9} $bg="#282828" $r="0 2.6px 2.6px 0" $pad="0 1.8px 0 5.5px">Keying<Chev s={5} /></Field>
      <MenuRow $ml={7} $gap={11.5}>
        <span>View</span><span>Marker</span>
      </MenuRow>
    </TimelineLeft>
    <Field $w={12} $center $pad="0" $c="#8e8e8e" $r="2.6px 0 0 2.6px"><Ico n="circle" s={9.6} /></Field>
    <Field $w={12} $center $bg="#282828" $pad="0" $r="0 2.6px 2.6px 0"><Chev s={5} c="#777" /></Field>
    <Group $ml={4.4} $h={12.9}>
      {['jumpstart', 'prevkey', 'playrev', 'play', 'nextkey', 'jumpend'].map(n => (
        <GroupBtn key={n} $w={12.7} $c="#e8e8e8"><Ico n={n} s={9.6} /></GroupBtn>
      ))}
    </Group>
    <Field $w={47.1} $auto $center>213</Field>
    <Group $ml={3.1} $h={12.9}>
      <GroupBtn $w={12.2}><Ico n="clock" s={9.6} /></GroupBtn>
      <GroupBtn $w={57.9} $spread><span>Start</span><span>1</span></GroupBtn>
      <GroupBtn $w={54.5} $spread><span>End</span><span>250</span></GroupBtn>
    </Group>
  </TimelineBar>
)

const OutlinerArea = () => (
  <Outliner>
    <OutlinerHeader>
      <ModeBtn $h={12.4}><Ico n="tree" s={9.6} /><Chev s={5} /></ModeBtn>
      <ModeBtn $h={12.4} $ml={3}><Ico n="layers" s={9.6} /><Chev s={5} /></ModeBtn>
      <SmallSearch $w={74.7} $ml={37.7}>
        <Ico n="search" s={9.6} c="#c8c8c8" />Search
      </SmallSearch>
      <ModeBtn $h={12.4} $ml={58.6}><Ico n="filter" s={9.6} /><Chev s={5} /></ModeBtn>
      <SmallBtn $w={12.4} $h={12.4} $ml={3.6} $r={2.6}><Ico n="newcoll" s={9.6} /></SmallBtn>
    </OutlinerHeader>

    <ORow $in={13}>
      <IconHalo $bg="#4a4a4a"><Ico n="collection" s={8.6} /></IconHalo>
      <OText $ml={2.6}>Scene Collection</OText>
    </ORow>
    <ORow $in={27} $alt>
      <Ico n="collection" s={8.6} />
      <OText $ml={4.9}>Collection</OText>
      <ORight>
        <Ico n="checkbox" s={8.8} c="#e4e4e4" />
        <Ico n="eye" s={9.6} c="#dadada" />
        <Ico n="camera" s={9.6} c="#e6e6e6" />
      </ORight>
    </ORow>
    <ORow $in={15.2} $c="#7d7d7d">
      <Chev s={6.6} c="#8a8a8a" w={0.5} />
      <Gap $w={5.2} />
      <Ico n="collection" s={8.6} c="#9a9a9a" />
      <OText $ml={4.9}>Coast defense ship</OText>
      <ORight>
        <Ico n="checkbox" s={8.8} c="#e4e4e4" />
        <Ico n="eyeoff" s={9.6} c="#8a8a8a" />
        <Ico n="camera" s={9.6} c="#e6e6e6" />
      </ORight>
    </ORow>
    <ORow $in={28.4} $c="#7d7d7d" $alt>
      <Chev d="right" s={6.6} c="#8a8a8a" w={0.5} />
      <Gap $w={3.4} />
      <Ico n="axis" s={9.4} c="#b87b45" />
      <Gap $w={6} />
      <Ico n="library" s={9.4} c="#9a9a9a" />
      <OText $ml={3.6}>Coast defense ship</OText>
      <Gap $w={15} />
      <BrushWrap>
        <Ico n="brush" s={9.4} c="#7a5a3a" />
        <BrushCount>500</BrushCount>
      </BrushWrap>
      <Gap $w={2.5} />
      <Ico n="bulb" s={9.4} c="#8f6a40" />
      <ORight>
        <Ico n="eye" s={9.6} c="#8a8a8a" />
        <Ico n="camera" s={9.6} c="#e6e6e6" />
      </ORight>
    </ORow>
    <ORow $in={15} $sel $c="#f0a63c">
      <Chev d="right" s={6.6} c="#d0d8e8" w={0.5} />
      <Gap $w={3.2} />
      <IconHalo $bg="#5a6c90"><Ico n="meshobj" s={9.4} c="#d68f4a" /></IconHalo>
      <OText $ml={2.9}>Plane</OText>
      <Gap $w={15.6} />
      <Ico n="wrench" s={9.4} c="#6a8fd8" />
      <Gap $w={3.2} />
      <Ico n="meshdata" s={9.4} c="#40c0a0" />
      <ORight>
        <Ico n="eye" s={9.6} c="#e0e0e0" />
        <Ico n="camera" s={9.6} c="#e6e6e6" />
      </ORight>
    </ORow>
    {[1, 0, 1, 0].map((a, i) => <ORow key={i} $alt={a === 1} />)}
  </Outliner>
)

const ssrLayout = { $label: 85.5, $field: 121.6 }
const colorLayout = { $label: 90.9, $field: 129.2 }

const Panel = ({ title, check, open, pb, children, pt }) => (
  <PanelBox $pb={pb}>
    <PanelHead>
      <Chev d={open ? 'down' : 'right'} s={7.6} c="#c6c6c6" w={0.55} />
      {check !== undefined && <Check on={check} />}
      <PanelTitle $check={check !== undefined}>{title}</PanelTitle>
      <PanelGrip />
    </PanelHead>
    {open && <PanelInner $pt={pt}>{children}</PanelInner>}
  </PanelBox>
)

const SliderRow = ({ label, value, fill, layout = ssrLayout }) => (
  <PropRow {...layout}>
    <PropLabel>{label}</PropLabel>
    <Slider>
      {fill > 0 && <SliderFill style={{ width: `${fill}%` }} />}
      <SliderText>{value}</SliderText>
    </Slider>
  </PropRow>
)

const DropPropRow = ({ label, value, mt, layout = ssrLayout }) => (
  <PropRow {...layout} $mt={mt}>
    <PropLabel>{label}</PropLabel>
    <PropDrop>{value}<Chev s={6.2} c="#c8c8c8" /></PropDrop>
  </PropRow>
)

const CheckPropRow = ({ label, on, layout = ssrLayout }) => (
  <PropRow {...layout}>
    <span />
    <CheckLabel><Check on={on} />{label}</CheckLabel>
  </PropRow>
)

const tabIcons = [
  ['tool', '#bdbdbd', 0], ['render', '#c4c4c4', 4.9, true], ['output', '#bdbdbd', 0], ['layers', '#a8a8a8', 0],
  ['scene', '#b4b4b4', 0], ['world', '#b85c62', 0], ['object', '#d0904f', 5], ['wrench', '#6a90d8', 0],
  ['particles', '#6a90d8', 0], ['physics', '#6a90d8', 0], ['constraint', '#6a90d8', 0], ['meshdata', '#38b898', 0],
  ['material', '#b85c62', 0], ['texture', '#a85a60', 5],
]

const PropertiesArea = () => (
  <Properties>
    <PropsHeader>
      <ModeBtn $h={12.4}><Ico n="display" s={9.6} /><Chev s={5} /></ModeBtn>
      <SmallSearch $w={75} $ml={68.5}><Ico n="search" s={9.6} c="#c8c8c8" />Search</SmallSearch>
      <ModeBtn $w={12.2} $h={12.4} $ml={74.5}><Chev s={5.6} /></ModeBtn>
    </PropsHeader>
    <PropsBody>
      <PropTabs>
        {tabIcons.map(([n, c, mt, on]) => (
          <PropTab key={n} $on={on} $mt={mt}><Ico n={n} s={10.4} c={c} /></PropTab>
        ))}
      </PropTabs>
      <PanelList>
        <PanelBox $pb={5.8}>
          <SubRow $in={97.3} $mt={2.2}><Check on />Viewport Denoising</SubRow>
        </PanelBox>
        <Panel title="Ambient Occlusion" check />
        <Panel title="Bloom" check />
        <Panel title="Depth of Field" />
        <Panel title="Subsurface Scattering" />
        <Panel title="Screen Space Reflections" check open pb={6.2} pt={4.6}>
          <CheckPropRow label="Refraction" on />
          <CheckPropRow label="Half Res Trace" />
          <SliderRow label="Trace Precision" value="0.250" fill={24.5} />
          <SliderRow label="Max Roughness" value="0.500" fill={49.8} />
          <SliderRow label="Thickness" value="0.2 m" />
          <SliderRow label="Edge Fading" value="0.075" fill={14.3} />
          <SliderRow label="Clamp" value="10.000" />
        </Panel>
        <Panel title="Motion Blur" check />
        <Panel title="Volumetrics" />
        <Panel title="Performance" open pb={6} pt={5}>
          <CheckPropRow label="High Quality Normals" on layout={colorLayout} />
        </Panel>
        <Panel title="Curves" />
        <Panel title="Shadows" open pb={5.8} pt={5.2}>
          <DropPropRow label="Cube Size" value="2048 px" />
          <DropPropRow label="Cascade Size" value="2048 px" />
          <CheckPropRow label="High Bit Depth" on />
          <CheckPropRow label="Soft Shadows" on />
          <SliderRow label="Light Threshold" value="0.010" />
        </Panel>
        <Panel title="Indirect Lighting" />
        <Panel title="Film" />
        <Panel title="Simplify" check />
        <Panel title="Grease Pencil" />
        <Panel title="Freestyle" check={false} />
        <Panel title="Color Management" open pb={3} pt={4.4}>
          <DropPropRow label="Display Device" value="sRGB" layout={colorLayout} />
          <DropPropRow label="View Transform" value="Filmic" mt={5.2} layout={colorLayout} />
          <DropPropRow label="Look" value="Very High Contrast" layout={colorLayout} />
          <SliderRow label="Exposure" value="0.200" fill={50.4} layout={colorLayout} />
          <SliderRow label="Gamma" value="1.200" fill={23.4} layout={colorLayout} />
          <DropPropRow label="Sequencer" value="sRGB" mt={5} layout={colorLayout} />
          <SubRow $in={13.6} $mt={5.5} $gap={0.6}><Chev d="right" s={7.6} c="#c6c6c6" />Display</SubRow>
          <SubRow $in={13.6} $mt={1.7} $gap={0.6}><Chev d="right" s={7.6} c="#c6c6c6" /><Check /><Gap $w={2} />Use Curves</SubRow>
        </Panel>
      </PanelList>
    </PropsBody>
    <PropScroll />
  </Properties>
)

const arrows = [
  '1285.2,244.4 1267.3,254.8 1273.4,258.6 1253.9,289.7 1257,291.6 1276.8,261.2 1283.2,265',
  '752.3,296.1 734.6,307 739.1,311.5 720.9,341.2 723.9,343.2 744.6,313.4 750,316.3',
  '1404.3,764.6 1386,775.7 1391.4,782.1 1372.9,809.7 1376,812 1395.4,786.9 1402,785.2',
  '1415.8,781.4 1398,792.4 1402.9,798.4 1384.4,826.6 1387.5,828.4 1406.7,803.7 1413.2,802',
]

export default function App() {
  return (
    <Page>
      <GlobalStyle />
      <Win>
        <TitleBar>
          <Lights>
            <Light $c="#ed6a5e" $dot="#8c1a10" />
            <Light $c="#f4bf4f" />
            <Light $c="#61c554" />
          </Lights>
          <Ico n="file" s={8} />
          <span>* Bateau - Blender 4.1</span>
        </TitleBar>

        <TopBar>
          <MenuSection>
            <Ico n="blender" s={10} c="#e6e6e6" />
            <MenuRow>
              <span>File</span><span>Edit</span><span>Render</span><span>Window</span><span>Help</span>
            </MenuRow>
          </MenuSection>
          <Tabs>
            {topTabs.map(t => <Tab key={t} $on={t === 'Compositing'}>{t}</Tab>)}
            <Tab $pad={3} $fs={10}>+</Tab>
          </Tabs>
          <SceneBoxes>
            <SelectorBox $w={122}>
              <SelectorIcon $w={19}><Ico n="scene" s={9.6} /><Chev s={5} /></SelectorIcon>
              <SelectorField>Scene<Ico n="pin" s={9} c="#999" /></SelectorField>
              <SmallBtn><Ico n="copy" s={9.6} /></SmallBtn>
              <SmallBtn $w={13.3} $bg="#3a3a3a" $c="#777"><Ico n="x" s={8} /></SmallBtn>
            </SelectorBox>
            <SelectorBox $w={122.6}>
              <SelectorIcon $w={19.6}><Ico n="layers" s={9.6} /><Chev s={5} /></SelectorIcon>
              <SelectorField>ViewLayer</SelectorField>
              <SmallBtn><Ico n="copy" s={9.6} /></SmallBtn>
              <SmallBtn $w={13.4} $bg="#3a3a3a" $c="#777"><Ico n="x" s={8} /></SmallBtn>
            </SelectorBox>
          </SceneBoxes>
        </TopBar>

        <Main>
          <LeftCol>
            <NodeEditor>
              <EditorHeader>
                <ModeBtn><Ico n="compositor" s={10} /><Chev s={5} /></ModeBtn>
                <MenuRow $ml={7.8}>
                  <span>View</span><span>Select</span><span>Add</span><span>Node</span>
                </MenuRow>
                <CheckLabel $ml={10.4} $fs={7.2} $gap={2.7}><Check on /><span>Use Nodes</span></CheckLabel>
                <Fill />
                <Ico n="pin" s={9.8} c="#9a9a9a" />
                <SmallBtn $bg="#3a3a3a" $c="#777" $h={12.4} $ml={4} $r={2.6}><Ico n="parent" s={9.6} /></SmallBtn>
                <Group $ml={3.5}>
                  <GroupBtn $w={53.5} $bg="#4a70ae" $c="#f0f0f0">Backdrop</GroupBtn>
                  <GroupBtn $bg="#4a70ae" $c="#fff"><Ico n="backA" s={10} /></GroupBtn>
                  <GroupBtn><Ico n="backB" s={10} /></GroupBtn>
                  <GroupBtn><Ico n="backC" s={10} /></GroupBtn>
                  <GroupBtn $c="#a8a8a8">R</GroupBtn>
                  <GroupBtn $c="#a8a8a8">G</GroupBtn>
                  <GroupBtn $c="#a8a8a8">B</GroupBtn>
                </Group>
                <Group $ml={3.6}>
                  <GroupBtn $c="#8e8e8e"><Ico n="magnet" s={9.6} /></GroupBtn>
                  <GroupBtn $w={20} $bg="#282828"><Ico n="gridsnap" s={9.6} /><Chev s={5} /></GroupBtn>
                </Group>
                <Group $ml={3.6}>
                  <GroupBtn $bg="#4a70ae" $c="#fff"><Ico n="overlay" s={9.6} /></GroupBtn>
                  <GroupBtn $bg="#282828"><Chev s={5} /></GroupBtn>
                </Group>
              </EditorHeader>
              <EditorBody>
                <NodeGraph />
                <NodeSidebar />
              </EditorBody>
            </NodeEditor>
            <DopeArea />
            <TimelineArea />
          </LeftCol>
          <RightCol>
            <OutlinerArea />
            <PropertiesArea />
          </RightCol>
        </Main>

        <StatusBar>
          <StatusItem $w={142}><Ico n="mouseL" s={12.5} /><span>Select</span></StatusItem>
          <StatusItem $w={141}><Ico n="mouseM" s={12.5} /><span>Pan View</span></StatusItem>
          <StatusItem $w={100}><Ico n="mouseR" s={12.5} /><span>Node</span></StatusItem>
          <StatusText>Scene Collection | Plane | Verts:654,481 | Faces:652,864 | Tris:1,305,728 | Objects:1/1 | Duration: 00:08+10 (Frame 213/250) | Memory: 1.66 GiB | 4.1.1</StatusText>
        </StatusBar>
      </Win>

      <Overlay viewBox="0 0 1568 894">
        {arrows.map(p => <polygon key={p} points={p} fill="#ee4218" />)}
      </Overlay>
    </Page>
  )
}
